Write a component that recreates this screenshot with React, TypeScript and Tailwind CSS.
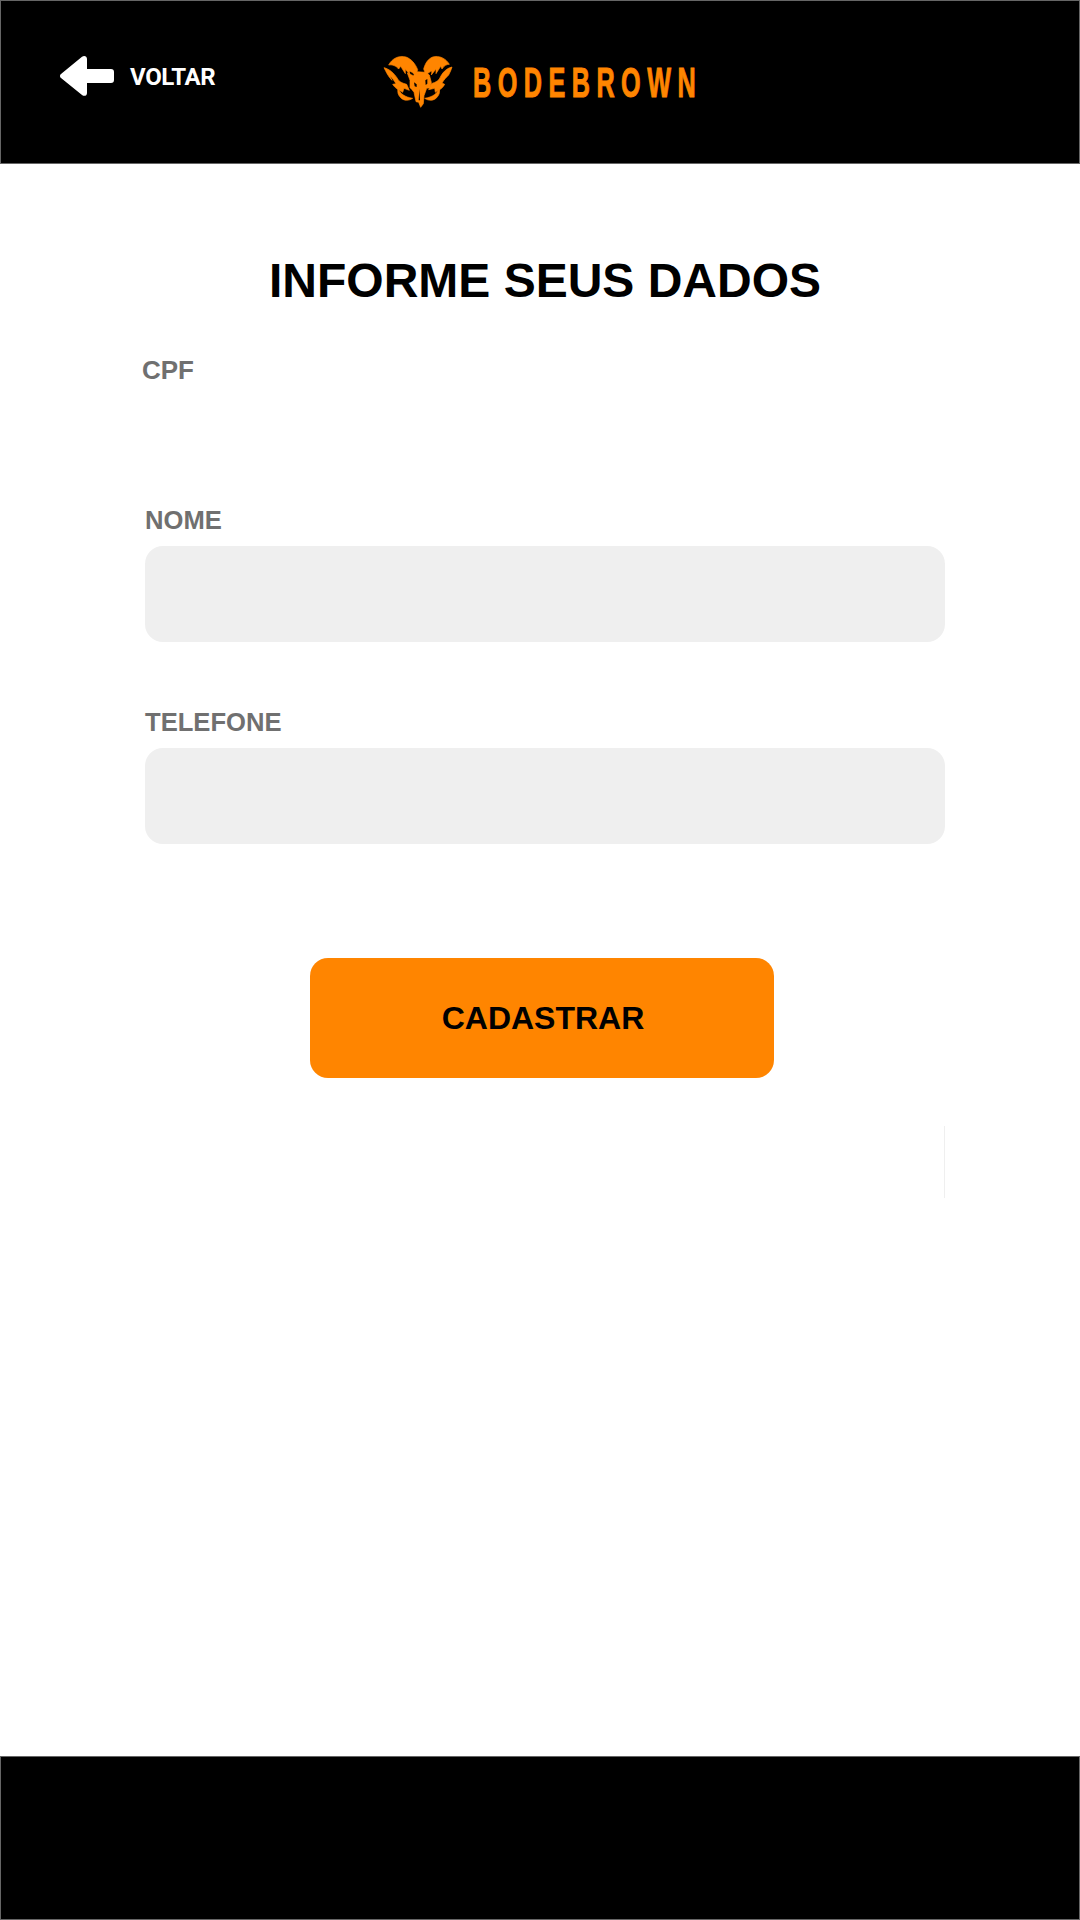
const RamSkull = () => (
  <svg viewBox="0 0 270 210" className="w-[90px] h-[70px] shrink-0" fill="#ff8500" stroke="#ff8500" strokeWidth="2" strokeLinejoin="round">
    {/* upper horns */}
    <path d="M56 60 C66 40 88 30 108 36 C124 42 136 56 143 74 L136 92 C130 84 124 80 118 78 L120 90 L106 72 L106 86 L92 64 L86 72 C80 64 68 58 56 60 Z" />
    <path d="M238 58 C228 40 206 30 188 36 C174 42 166 54 161 72 L168 90 C174 84 180 80 186 78 L184 90 L198 72 L198 86 L212 64 L216 72 C222 62 230 58 238 58 Z" />
    {/* outer horns */}
    <path d="M42 68 C58 72 72 84 82 100 C86 110 96 114 110 118 L118 136 L102 130 L98 142 C84 134 76 130 68 118 L78 116 C72 106 66 98 60 92 L66 106 C54 94 48 80 42 68 Z" />
    <path d="M246 66 C230 70 220 80 212 94 C208 106 198 112 184 116 L176 134 L194 130 L196 142 C210 134 218 130 224 118 L216 114 C222 104 228 98 236 90 C240 82 244 74 246 66 Z" />
    {/* lower curls */}
    <path d="M84 130 C90 146 104 156 128 160 C116 168 102 168 92 158 C84 150 82 142 84 130 Z" />
    <path d="M208 130 C202 146 188 156 164 160 C176 168 190 168 200 158 C208 150 210 142 208 130 Z" />
    {/* skull */}
    <path d="M112 84 L130 92 L140 80 L168 82 L178 90 L184 112 L180 128 L170 130 L162 152 L160 176 L152 187 L146 172 L138 170 L132 142 L126 134 L120 128 L120 106 Z" />
    <path d="M132 112 L140 118 L140 126 L134 124 Z M166 106 L172 102 L172 116 L167 120 Z M148 132 L150 166 L146 166 Z" fill="#000" stroke="none" />
  </svg>
);

const Field = ({ label }: { label: string }) => (
  <div className="flex flex-col">
    <label className="text-[25.6px] leading-[29px] font-bold text-[#707070]">{label}</label>
    <div className="mt-[11px] w-[800px] h-[96px] rounded-[18px] bg-[#efefef]" />
  </div>
);

export default function App() {
  return (
    <div className="w-[1080px] h-[1920px] flex flex-col bg-white font-['Liberation_Sans',Arial,sans-serif]">
      <header className="h-[164px] shrink-0 bg-black border border-[#666666] flex items-start pl-[59px]">
        <div className="flex items-center gap-[16px] w-[310px] mt-[55px]">
          <svg viewBox="0 0 54 40" className="w-[54px] h-[40px]" fill="#fff">
            <path d="M0 20 C0 19 0.6 18.4 1 18 L22 0.8 C24 -0.6 27 0 27 3 L27 13 L51 13 C53 13 54 14 54 16 L54 24 C54 26 53 27 51 27 L27 27 L27 37 C27 40 24 40.6 22 39 L1 22 C0.6 21.6 0 21 0 20 Z" />
          </svg>
          <span className="mt-[2px] font-['Roboto',sans-serif] text-[24px] leading-none font-bold text-white tracking-[-0.4px]">VOLTAR</span>
        </div>
        <div className="flex items-center gap-[13px] mt-[44px]">
          <RamSkull />
          <span className="mt-[5px] origin-left scale-x-[0.6] [-webkit-text-stroke:1px_#ff8500] text-[42px] leading-none font-bold text-[#ff8500] tracking-[10.8px]">BODEBROWN</span>
        </div>
      </header>

      <main className="flex-1 flex flex-col">
        <h1 className="mt-[87px] ml-[269px] text-[48px] leading-[60px] font-bold text-black">INFORME SEUS DADOS</h1>
        <div className="mt-[44px] ml-[142px] text-[26px] leading-[30px] font-bold text-[#707070]">CPF</div>
        <div className="ml-[145px] mt-[121px] flex flex-col gap-[66px]">
          <Field label="NOME" />
          <Field label="TELEFONE" />
        </div>
        <button className="mt-[114px] ml-[310px] w-[464px] h-[120px] pl-[2px] rounded-[18px] bg-[#ff8500] text-[32px] font-bold text-black">
          CADASTRAR
        </button>
        <div className="mt-[48px] ml-[944px] w-px h-[72px] bg-[#efefef]" />
      </main>

      <footer className="h-[164px] shrink-0 bg-black border border-[#666666]" />
    </div>
  );
}
